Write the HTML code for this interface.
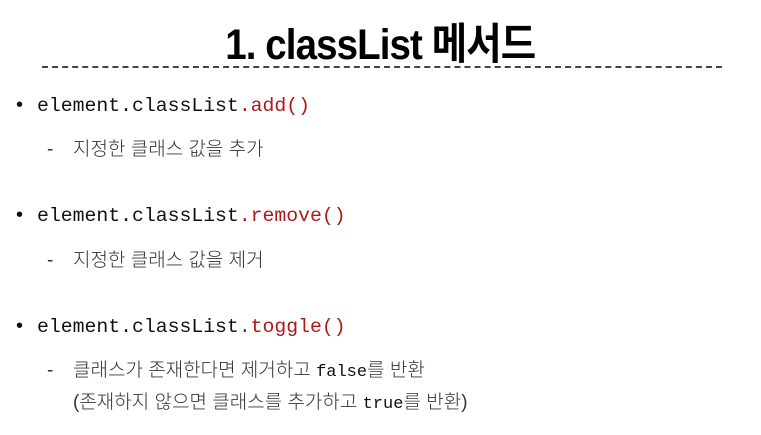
<!DOCTYPE html>
<html><head><meta charset="utf-8"><style>
body{margin:0;width:761px;height:435px;background:#fff;position:relative;overflow:hidden;font-family:"Liberation Sans","Noto Sans CJK KR",sans-serif}
.t{position:absolute;left:0;width:761px;top:10px;text-align:center;font-size:43px;font-weight:bold;color:#000}
.t span{display:inline-block;transform:scaleX(0.895);letter-spacing:-1px}
.dash{position:absolute;left:42px;width:680px;top:66px;border-top:2px dashed #444}
.b{position:absolute;left:16px;font-size:20px;color:#111}
.b .dot{display:inline-block;width:21px;font-family:"Liberation Sans",sans-serif}
.b code{font-family:"Liberation Mono",monospace;font-size:19.8px}
.r{color:#b01818}
.s{position:absolute;left:47px;font-size:19px;color:#333;font-weight:300}
.s .d{display:inline-block;width:26px}
.s code{font-family:"Liberation Mono",monospace;font-size:17px;color:#111}
</style></head><body>
<div class="t"><span>1. classList 메서드</span></div>
<div class="dash"></div>
<div class="b" style="top:94px"><span class="dot">•</span><code>element.classList<span class="r">.add()</span></code></div>
<div class="s" style="top:134px"><span class="d">-</span>지정한 클래스 값을 추가</div>
<div class="b" style="top:204px"><span class="dot">•</span><code>element.classList<span class="r">.remove()</span></code></div>
<div class="s" style="top:245px"><span class="d">-</span>지정한 클래스 값을 제거</div>
<div class="b" style="top:315px"><span class="dot">•</span><code>element.classList<span class="r">.toggle()</span></code></div>
<div class="s" style="top:355px"><span class="d">-</span>클래스가 존재한다면 제거하고 <code>false</code>를 반환</div>
<div class="s" style="top:387px"><span class="d"></span>(존재하지 않으면 클래스를 추가하고 <code>true</code>를 반환)</div>
</body></html>
